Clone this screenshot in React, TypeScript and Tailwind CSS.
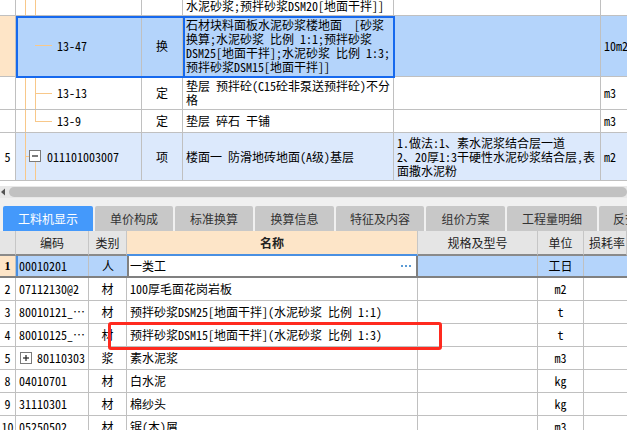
import React from "react";

const MONO = "font-['Noto_Sans_Mono_CJK_SC','Noto_Sans_CJK_SC',monospace]";
const UI = "font-['Noto_Sans_CJK_SC','Noto_Sans',sans-serif]";

function VLine({ x, top = 0, bottom = 0 }: { x: number; top?: number; bottom?: number }) {
  return <span className="absolute w-px bg-[#f8c88a]" style={{ left: x, top, bottom }} />;
}

function HLine({ x, w, y }: { x: number; w: number; y: number }) {
  return <span className="absolute h-px bg-[#f8c88a]" style={{ left: x, top: y, width: w }} />;
}

function TreeBox({ plus, size }: { plus?: boolean; size: number }) {
  return (
    <span
      className="flex items-center justify-center border border-[#7a7a7a] bg-white"
      style={{ width: size, height: size }}
    >
      <svg width={size - 2} height={size - 2} viewBox="0 0 10 10">
        <path d="M2 5h6" stroke="#222" strokeWidth="1.2" />
        {plus && <path d="M5 2v6" stroke="#222" strokeWidth="1.2" />}
      </svg>
    </span>
  );
}

function TopTable() {
  const line = "border-r border-[#c0c0c0]";
  return (
    <div className={`relative ${MONO} text-[12px] leading-[14px] text-black`}>
      {/* row above, scrolled off */}
      <div className="flex h-[16px] border-b border-[#c0c0c0]">
        <div className={`w-[16px] ${line}`} />
        <div className={`relative w-[126px] ${line}`}>
          <VLine x={9} />
          <VLine x={19} />
        </div>
        <div className={`w-[41px] ${line}`} />
        <div className={`w-[211px] ${line} flex items-end px-[3px] pb-[2px] whitespace-pre overflow-hidden`}>
          水泥砂浆;预拌砂浆DSM20[地面干拌]]
        </div>
        <div className={`w-[207px] ${line}`} />
        <div className="flex-1" />
      </div>

      {/* selected row */}
      <div className="flex h-[61px] border-b border-[#c0c0c0] bg-[#b4d4fb]">
        <div className={`w-[16px] ${line} bg-[#fee5c7]`} />
        <div className={`relative w-[126px] ${line} flex items-center pl-[41px]`}>
          <HLine x={19} w={17} y={29} />
          13-47
        </div>
        <div className={`w-[41px] ${line} flex items-center justify-center`}>换</div>
        <div className={`w-[211px] ${line} flex flex-col justify-center px-[3px] whitespace-pre overflow-hidden`}>
          <div>石材块料面板水泥砂浆楼地面  [砂浆</div>
          <div>换算;水泥砂浆 比例 1:1;预拌砂浆</div>
          <div>DSM25[地面干拌];水泥砂浆 比例 1:3;</div>
          <div>预拌砂浆DSM15[地面干拌]]</div>
        </div>
        <div className={`w-[207px] ${line}`} />
        <div className="flex-1 flex items-center px-[3px] whitespace-nowrap overflow-hidden">10m2</div>
      </div>

      {/* 13-13 */}
      <div className="flex h-[33px] border-b border-[#c0c0c0]">
        <div className={`w-[16px] ${line}`} />
        <div className={`relative w-[126px] ${line} flex items-center pl-[41px]`}>
          <VLine x={9} />
          <VLine x={19} />
          <HLine x={19} w={17} y={16} />
          13-13
        </div>
        <div className={`w-[41px] ${line} flex items-center justify-center`}>定</div>
        <div className={`w-[211px] ${line} flex flex-col justify-center px-[3px] whitespace-pre overflow-hidden`}>
          <div>垫层 预拌砼(C15砼非泵送预拌砼)不分</div>
          <div>格</div>
        </div>
        <div className={`w-[207px] ${line}`} />
        <div className="flex-1 flex items-center px-[3px]">m3</div>
      </div>

      {/* 13-9 */}
      <div className="flex h-[23px] border-b border-[#c0c0c0]">
        <div className={`w-[16px] ${line}`} />
        <div className={`relative w-[126px] ${line} flex items-center pl-[41px]`}>
          <VLine x={9} />
          <VLine x={19} bottom={11} />
          <HLine x={19} w={17} y={11} />
          13-9
        </div>
        <div className={`w-[41px] ${line} flex items-center justify-center`}>定</div>
        <div className={`w-[211px] ${line} flex items-center px-[3px] whitespace-pre`}>垫层 碎石 干铺</div>
        <div className={`w-[207px] ${line}`} />
        <div className="flex-1 flex items-center px-[3px]">m3</div>
      </div>

      {/* 5 */}
      <div className="flex h-[48px] border-b border-[#c0c0c0]">
        <div className={`w-[16px] ${line} flex items-center justify-center`}>5</div>
        <div className={`relative w-[126px] ${line} bg-[#dce9fc] flex items-center pl-[31px]`}>
          <VLine x={9} />
          <VLine x={19} top={29} />
          <HLine x={9} w={4} y={23} />
          <span className="absolute left-[13px] top-[17px]">
            <TreeBox size={12} />
          </span>
          011101003007
        </div>
        <div className={`w-[41px] ${line} bg-[#dce9fc] flex items-center justify-center`}>项</div>
        <div className={`w-[211px] ${line} bg-[#dce9fc] flex items-center px-[3px] whitespace-pre`}>
          楼面一 防滑地砖地面(A级)基层
        </div>
        <div className={`w-[207px] ${line} bg-[#dce9fc] flex flex-col justify-center px-[3px] whitespace-pre overflow-hidden`}>
          <div>1.做法:1、素水泥浆结合层一道</div>
          <div>2、20厚1:3干硬性水泥砂浆结合层,表</div>
          <div>面撒水泥粉</div>
        </div>
        <div className="flex-1 bg-[#dce9fc] flex items-center px-[3px]">m2</div>
      </div>

      {/* selection frame */}
      <div className="absolute left-[16px] top-[16px] w-[379px] h-[62px] border-2 border-[#1669ee] pointer-events-none">
        <div className="absolute left-[165px] top-0 bottom-0 w-[2px] bg-[#1669ee]" />
      </div>
    </div>
  );
}

function Scrollbar() {
  return (
    <div className="flex items-center h-[12px] bg-[#e8e8e8]">
      <svg width="9" height="12" viewBox="0 0 9 12" className="shrink-0">
        <path d="M1 6 L5 2.5 L5 9.5 Z" fill="#555" />
      </svg>
      <div className="flex-1 h-[10px] rounded-full bg-[#c1c1c1]" />
    </div>
  );
}

const TABS: { label: string; w: string; active?: boolean }[] = [
  { label: "工料机显示", w: "w-[90px]", active: true },
  { label: "单价构成", w: "w-[78px]" },
  { label: "标准换算", w: "w-[78px]" },
  { label: "换算信息", w: "w-[79px]" },
  { label: "特征及内容", w: "w-[88px]" },
  { label: "组价方案", w: "w-[79px]" },
  { label: "工程量明细", w: "w-[90px]" },
];

function Tabs() {
  return (
    <div className={`flex items-end h-[33px] bg-[#f0f0f0] pl-[3px] gap-[2px] overflow-hidden ${UI} text-[12px]`}>
      {TABS.map((t) => (
        <div
          key={t.label}
          className={`${t.w} shrink-0 h-[25px] rounded-t-[2px] flex items-center justify-center ${
            t.active ? "bg-[#4499fb] text-white" : "bg-[#c8c8c8] text-[#333]"
          }`}
        >
          {t.label}
        </div>
      ))}
      <div className="w-[90px] shrink-0 h-[25px] rounded-t-[2px] bg-[#c8c8c8] text-[#333] flex items-center pl-[14px]">
        反查
      </div>
    </div>
  );
}

interface Item { no: string; code: string; kind: string; name: string; unit: string; box?: boolean }

const ITEMS: Item[] = [
  { no: "2", code: "07112130@2", kind: "材", name: "100厚毛面花岗岩板", unit: "m2" },
  { no: "3", code: "80010121_…", kind: "材", name: "预拌砂浆DSM25[地面干拌](水泥砂浆 比例 1:1)", unit: "t" },
  { no: "4", code: "80010125_…", kind: "材", name: "预拌砂浆DSM15[地面干拌](水泥砂浆 比例 1:3)", unit: "t" },
  { no: "5", code: "80110303", kind: "浆", name: "素水泥浆", unit: "m3", box: true },
  { no: "8", code: "04010701", kind: "材", name: "白水泥", unit: "kg" },
  { no: "9", code: "31110301", kind: "材", name: "棉纱头", unit: "kg" },
  { no: "10", code: "05250502", kind: "材", name: "锯(木)屑", unit: "m3" },
];

function BottomTable() {
  const line = "border-r border-[#c0c0c0]";
  const head = "border-r border-[#c6c6c6] border-b-2 border-b-[#8a8a8a] flex items-center justify-center";
  return (
    <div className="relative">
      {/* header */}
      <div className={`flex h-[25px] bg-[#e5e5e5] ${UI} text-[12px] text-[#222]`}>
        <div className={`w-[16px] ${head}`} />
        <div className={`w-[73px] ${head}`}>编码</div>
        <div className={`w-[38px] ${head}`}>类别</div>
        <div className="w-[291px] border-r border-[#c6c6c6] border-b-2 border-b-[#4a90e2] bg-[#fde5c8] flex items-center justify-center font-bold">
          名称
        </div>
        <div className={`w-[120px] ${head}`}>规格及型号</div>
        <div className={`w-[46px] ${head}`}>单位</div>
        <div className={`flex-1 ${head} justify-start pl-[5px] whitespace-nowrap`}>损耗率</div>
      </div>

      <div className={`${MONO} text-[12px] text-black`}>
        {/* row 1, current */}
        <div className="flex h-[22px] border-b-2 border-[#808080] bg-[#b4d4fb]">
          <div className="w-[16px] border-r border-[#c0c0c0] bg-[#fde5c8] flex items-center justify-center font-bold font-['Liberation_Serif',serif]">
            1
          </div>
          <div className={`w-[73px] ${line} border-l-2 border-l-[#4a90e2] flex items-center pl-[1px]`}>00010201</div>
          <div className="w-[38px] flex items-center justify-center">人</div>
          <div className="w-[291px] border-x-2 border-[#808080] bg-white flex items-center pl-[1px] pr-[5px]">
            <span className="flex-1">一类工</span>
            <span className="flex gap-[2px]">
              <span className="w-[2px] h-[2px] bg-[#5b9bd5]" />
              <span className="w-[2px] h-[2px] bg-[#5b9bd5]" />
              <span className="w-[2px] h-[2px] bg-[#5b9bd5]" />
            </span>
          </div>
          <div className={`w-[120px] ${line}`} />
          <div className={`w-[46px] ${line} flex items-center justify-center`}>工日</div>
          <div className="flex-1" />
        </div>

        {ITEMS.map((it) => (
          <div key={it.no} className="flex h-[23px] border-b border-[#c0c0c0]">
            <div className={`w-[16px] ${line} flex items-center justify-center`}>{it.no}</div>
            <div className={`relative w-[73px] ${line} flex items-center whitespace-nowrap overflow-hidden ${it.box ? "pl-[21px]" : "pl-[3px]"}`}>
              {it.box && (
                <span className="absolute left-[4px] top-[5px]">
                  <TreeBox plus size={12} />
                </span>
              )}
              {it.code}
            </div>
            <div className={`w-[38px] ${line} flex items-center justify-center`}>{it.kind}</div>
            <div className={`w-[291px] ${line} flex items-center pl-[3px] whitespace-pre overflow-hidden`}>{it.name}</div>
            <div className={`w-[120px] ${line}`} />
            <div className={`w-[46px] ${line} flex items-center justify-center`}>{it.unit}</div>
            <div className="flex-1" />
          </div>
        ))}
      </div>

      {/* red highlight annotation */}
      <div className="absolute left-[108px] top-[91px] w-[334px] h-[28px] border-[3px] border-[#ff2a1f] rounded-[3px] pointer-events-none" />
    </div>
  );
}

export default function App() {
  return (
    <div className="w-[627px] h-[430px] overflow-hidden bg-white">
      <TopTable />
      <div className="h-[5px] bg-white" />
      <Scrollbar />
      <Tabs />
      <BottomTable />
    </div>
  );
}
